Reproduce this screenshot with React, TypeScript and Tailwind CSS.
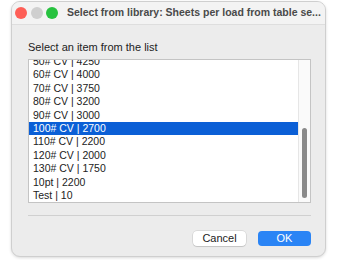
import React from 'react';

const items = [
    '50# CV | 4250',
    '60# CV | 4000',
    '70# CV | 3750',
    '80# CV | 3200',
    '90# CV | 3000',
    '100# CV | 2700',
    '110# CV | 2200',
    '120# CV | 2000',
    '130# CV | 1750',
    '10pt | 2200',
    'Test | 10',
];

const selected = '100# CV | 2700';

const App: React.FC = () => {
    return (
        <div
            className="w-[340px] h-[260px] bg-white pt-[1px] pl-[11px]"
            style={{ fontFamily: '"Liberation Sans", Arial, sans-serif' }}
        >
            <div className="w-[315px] h-[256px] rounded-[9px] border border-[#cfcfcf] bg-[#ececec] shadow-[0_1px_3px_rgba(0,0,0,0.15)] flex flex-col overflow-hidden">
                {/* title bar */}
                <div className="h-[23px] shrink-0 bg-[#f3f3f3] border-b border-[#dedede] flex items-center pl-[3px]">
                    <div className="flex items-center gap-[3.5px]">
                        <span className="w-[12px] h-[12px] rounded-full bg-[#fe5f57]" />
                        <span className="w-[12px] h-[12px] rounded-full bg-[#cfcfcf]" />
                        <span className="w-[12px] h-[12px] rounded-full bg-[#27c23f]" />
                    </div>
                    <span className="ml-[9px] text-[10.5px] font-bold text-[#4a4a4a] whitespace-nowrap tracking-[0px]">
                        Select from library: Sheets per load from table se...
                    </span>
                </div>

                <div className="flex flex-col pl-[16px] pr-[14px]">
                    <div className="mt-[15px] text-[11px] text-[#222] leading-[14px]">Select an item from the list</div>

                    {/* list */}
                    <div className="mt-[5px] h-[144px] border border-[#c4c4c4] bg-white flex overflow-hidden">
                        <div className="flex-1 overflow-hidden">
                            <div className="-mt-[5px]">
                                {items.map((item) => (
                                    <div
                                        key={item}
                                        className={
                                            item === selected
                                                ? 'h-[13.4px] leading-[13.4px] pl-[4px] text-[10.5px] bg-[#0b5fd6] text-white whitespace-nowrap'
                                                : 'h-[13.4px] leading-[13.4px] pl-[4px] text-[10.5px] text-[#222] whitespace-nowrap'
                                        }
                                    >
                                        {item}
                                    </div>
                                ))}
                            </div>
                        </div>
                        <div className="w-[12px] shrink-0 bg-[#fafafa] border-l border-[#e6e6e6] flex flex-col pl-[3px] pt-[68px]">
                            <div className="w-[5px] h-[70px] rounded-full bg-[#8a8a8a]" />
                        </div>
                    </div>

                    {/* separator */}
                    <div className="mt-[12px] h-px bg-[#d0d0d0]" />

                    {/* buttons */}
                    <div className="mt-[15px] flex justify-end gap-[12px]">
                        <button className="w-[53px] h-[15px] rounded-[4px] bg-white shadow-[0_0_0_0.5px_rgba(0,0,0,0.15),0_1px_1px_rgba(0,0,0,0.1)] text-[11px] leading-[15px] text-[#222]">
                            Cancel
                        </button>
                        <button className="w-[53px] h-[15px] rounded-[4px] bg-[#2a84f5] text-[11px] leading-[15px] text-white">
                            OK
                        </button>
                    </div>
                </div>
            </div>
        </div>
    );
};

export default App;
